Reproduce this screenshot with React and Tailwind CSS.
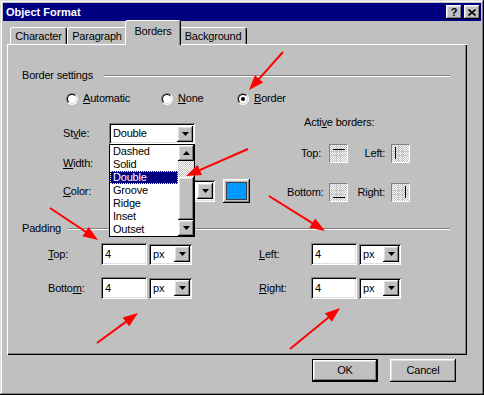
import React from 'react'

const RAISED = 'shadow-[inset_-1px_-1px_#000,inset_1px_1px_#fff,inset_-2px_-2px_#808080,inset_2px_2px_#dfdfdf]'
const SUNKEN = 'shadow-[inset_1px_1px_#808080,inset_-1px_-1px_#fff,inset_2px_2px_#000,inset_-2px_-2px_#dfdfdf]'
const CHECKER = 'bg-[repeating-conic-gradient(#ffffff_0_25%,#c0c0c0_0_50%)] bg-[length:2px_2px]'

const STYLES = ['Dashed', 'Solid', 'Double', 'Groove', 'Ridge', 'Inset', 'Outset']

function Tri({ up }) {
  return (
    <svg width="7" height="4" viewBox="0 0 7 4">
      <polygon points={up ? '3.5,0 7,4 0,4' : '0,0 7,0 3.5,4'} fill="#000" />
    </svg>
  )
}

function ArrowBtn({ className = '' }) {
  return (
    <div className={`w-[16px] h-[16px] bg-[#c0c0c0] flex items-center justify-center ${RAISED} ${className}`}>
      <Tri />
    </div>
  )
}

function Select({ value, w, h = 'h-[21px]', children }) {
  return (
    <div className={`relative ${w} ${h} bg-white ${SUNKEN} flex items-center p-[2px]`}>
      <span className="flex-1 pl-[2px] leading-none">{value}</span>
      <ArrowBtn />
      {children}
    </div>
  )
}

function Radio({ checked, children, className = '' }) {
  return (
    <div className={`flex items-center ${className}`}>
      <span className="w-[12px] h-[12px] rounded-full border border-t-[#808080] border-l-[#808080] border-r-white border-b-white flex">
        <span className="w-full h-full rounded-full bg-white border border-t-black border-l-black border-r-[#dfdfdf] border-b-[#dfdfdf] flex items-center justify-center">
          {checked && <span className="w-[4px] h-[4px] rounded-full bg-black" />}
        </span>
      </span>
      <span className="ml-[5px]">{children}</span>
    </div>
  )
}

function GroupHeader({ label, labelW }) {
  return (
    <div className="h-[13px] flex items-center pl-[15px] pr-[17px]">
      <span className={`${labelW} shrink-0 leading-none`}>{label}</span>
      <div className="flex-1 h-[2px] border-t border-t-[#808080] border-b border-b-white" />
    </div>
  )
}

function EdgeBox({ side }) {
  const line = {
    top: <line x1="3" y1="4.5" x2="15" y2="4.5" />,
    left: <line x1="3.5" y1="2" x2="3.5" y2="14" />,
    bottom: <line x1="3" y1="13.5" x2="15" y2="13.5" />,
    right: <line x1="13.5" y1="2" x2="13.5" y2="14" />,
  }[side]
  return (
    <div className={`w-[19px] h-[19px] border border-t-[#808080] border-l-[#808080] border-r-white border-b-white ${CHECKER}`}>
      <svg width="17" height="17" viewBox="0 0 17 17">
        <g stroke="#b4b4b4" strokeDasharray="1 1" opacity="0.6">
          <line x1="6.5" y1="1" x2="6.5" y2="16" />
          <line x1="10.5" y1="1" x2="10.5" y2="16" />
          <line x1="1" y1="6.5" x2="16" y2="6.5" />
          <line x1="1" y1="10.5" x2="16" y2="10.5" />
        </g>
        <g stroke="#000" strokeWidth="1">{line}</g>
      </svg>
    </div>
  )
}

function NumField() {
  return (
    <div className={`w-[46px] h-[22px] bg-white ${SUNKEN} flex items-center pl-[4px]`}>4</div>
  )
}

function PadRow({ l1, l2, className = '' }) {
  return (
    <div className={`h-[22px] flex items-center pl-[41px] ${className}`}>
      <span className="w-[53px]">{l1}</span>
      <NumField />
      <div className="ml-[2px]"><Select value="px" w="w-[43px]" /></div>
      <span className="ml-[67px] w-[52px]">{l2}</span>
      <NumField />
      <div className="ml-[2px]"><Select value="px" w="w-[42px]" /></div>
    </div>
  )
}

function RedArrow({ x1, y1, x2, y2 }) {
  const a = Math.atan2(y2 - y1, x2 - x1)
  const L = 15
  const W = 5.5
  const bx = x2 - L * Math.cos(a)
  const by = y2 - L * Math.sin(a)
  const px = -Math.sin(a) * W
  const py = Math.cos(a) * W
  return (
    <g>
      <line x1={x1} y1={y1} x2={bx + 2 * Math.cos(a)} y2={by + 2 * Math.sin(a)} stroke="#ff0000" strokeWidth="2" />
      <polygon points={`${x2},${y2} ${bx + px},${by + py} ${bx - px},${by - py}`} fill="#ff0000" />
    </g>
  )
}

const ARROWS = [
  [283, 52, 249, 90],
  [248, 149, 186, 176],
  [50, 208, 98, 240],
  [269, 196, 325, 231],
  [97, 343, 138, 313],
  [290, 349, 340, 308],
]

export default function App() {
  return (
    <div className={`relative w-[484px] h-[395px] bg-[#c0c0c0] p-[3px] flex flex-col text-[11px] text-black font-['Liberation_Sans',Arial,sans-serif] tracking-[-0.2px] shadow-[inset_-1px_-1px_#000,inset_1px_1px_#dfdfdf,inset_-2px_-2px_#808080,inset_2px_2px_#fff]`}>
      {/* Title bar */}
      <div className="h-[18px] bg-[#000080] flex items-center pl-[3px] pr-[1px]">
        <span className="text-white font-bold tracking-normal">Object Format</span>
        <div className="ml-auto flex gap-[2px]">
          <div className={`w-[16px] h-[14px] bg-[#c0c0c0] ${RAISED} flex items-center justify-center font-bold leading-none`}>?</div>
          <div className={`w-[16px] h-[14px] bg-[#c0c0c0] ${RAISED} flex items-center justify-center`}>
            <svg width="8" height="7" viewBox="0 0 8 7">
              <path d="M0.5 0.5L7.5 6.5M7.5 0.5L0.5 6.5" stroke="#000" strokeWidth="1.6" />
            </svg>
          </div>
        </div>
      </div>

      {/* Tabs */}
      <div className="mt-[2px] h-[21px] flex items-end pl-[7px]">
        {[
          ['Character', 'w-[57px]'],
          ['Paragraph', 'w-[60px]'],
          ['Borders', 'w-[50px]', true],
          ['Background', 'w-[68px]'],
        ].map(([t, w, sel]) => (
          <div
            key={t}
            className={`${w} flex justify-center border-t border-l border-white border-r border-r-black rounded-t-[3px] shadow-[inset_-1px_0_#808080] bg-[#c0c0c0] ${
              sel ? 'h-[22px] -mb-[1px] -mx-[2px] box-content px-[2px] relative z-10 items-start pt-[2px]' : 'h-[17px] items-center'
            }`}
          >
            {t}
          </div>
        ))}
      </div>

      {/* Panel */}
      <div className="ml-[4px] w-[460px] h-[311px] flex flex-col shadow-[inset_1px_1px_#fff,inset_-1px_-1px_#000,inset_-2px_-2px_#808080]">
        <div className="mt-[25px]">
          <GroupHeader label="Border settings" labelW="w-[82px]" />
        </div>

        <div className="mt-[10px] h-[13px] flex items-center pl-[59px]">
          <Radio className="w-[95px]"><span className="underline">A</span>utomatic</Radio>
          <Radio className="w-[76px]"><span className="underline">N</span>one</Radio>
          <Radio checked><span className="underline">B</span>order</Radio>
        </div>

        <div className="mt-[11px] flex">
          <div className="w-[280px] pt-[7px] pl-[56px] flex flex-col">
            <div className="h-[21px] flex items-center relative z-20">
              <span className="w-[46px]">St<span className="underline">y</span>le:</span>
              <Select value="Double" w="w-[86px]">
                <div className="absolute left-0 top-[21px] w-[86px] h-[93px] border border-black bg-white flex">
                  <div className="flex-1 flex flex-col">
                    {STYLES.map((s) => (
                      <div
                        key={s}
                        className={`h-[13px] leading-[13px] pl-[3px] ${
                          s === 'Double' ? 'bg-[#000080] text-white outline-1 outline-dotted outline-[#ffffa0] -outline-offset-1' : ''
                        }`}
                      >
                        {s}
                      </div>
                    ))}
                  </div>
                  <div className="w-[16px] flex flex-col">
                    <div className={`h-[16px] bg-[#c0c0c0] flex items-center justify-center ${RAISED}`}><Tri up /></div>
                    <div className={`h-[16px] ${CHECKER}`} />
                    <div className={`h-[43px] bg-[#c0c0c0] ${RAISED}`} />
                    <div className={`h-[16px] bg-[#c0c0c0] flex items-center justify-center ${RAISED}`}><Tri /></div>
                  </div>
                </div>
              </Select>
            </div>
            <div className="mt-[9px] h-[21px] flex items-center">
              <span className="w-[46px]"><span className="underline">W</span>idth:</span>
              <Select value="" w="w-[86px]" />
            </div>
            <div className="mt-[6px] h-[22px] flex items-center">
              <span className="w-[46px]"><span className="underline">C</span>olor:</span>
              <Select value="" w="w-[106px]" h="h-[22px]" />
              <div className={`ml-[8px] w-[27px] h-[24px] bg-[#c0c0c0] ${RAISED} p-[3px]`}>
                <div className="w-full h-full bg-[#0099ff] border border-[#404040]" />
              </div>
            </div>
          </div>

          <div className="flex flex-col">
            <div className="h-[13px] leading-[13px] pl-[17px]">Acti<span className="underline">v</span>e borders:</div>
            <div className="mt-[15px] h-[19px] flex items-center">
              <span className="w-[34px] text-right">Top:</span>
              <div className="ml-[8px]"><EdgeBox side="top" /></div>
              <span className="w-[37px] text-right">Left:</span>
              <div className="ml-[6px]"><EdgeBox side="left" /></div>
            </div>
            <div className="mt-[20px] h-[19px] flex items-center">
              <span className="w-[34px] text-right">Bottom:</span>
              <div className="ml-[8px]"><EdgeBox side="bottom" /></div>
              <span className="w-[37px] text-right">Right:</span>
              <div className="ml-[6px]"><EdgeBox side="right" /></div>
            </div>
          </div>
        </div>

        <div className="mt-[20px]">
          <GroupHeader label="Padding" labelW="w-[46px]" />
        </div>
        <PadRow
          className="mt-[8px]"
          l1={<><span className="underline">T</span>op:</>}
          l2={<><span className="underline">L</span>eft:</>}
        />
        <PadRow
          className="mt-[12px]"
          l1={<>Botto<span className="underline">m</span>:</>}
          l2={<><span className="underline">R</span>ight:</>}
        />
      </div>

      {/* Buttons */}
      <div className="mt-[4px] flex justify-end gap-[12px] pr-[25px]">
        <div className="w-[66px] h-[23px] border border-black">
          <div className={`w-full h-full flex items-center justify-center ${RAISED}`}>OK</div>
        </div>
        <div className={`w-[66px] h-[23px] flex items-center justify-center ${RAISED}`}>Cancel</div>
      </div>

      <svg className="absolute inset-0 pointer-events-none z-30" width="484" height="395">
        {ARROWS.map(([x1, y1, x2, y2], i) => (
          <RedArrow key={i} x1={x1} y1={y1} x2={x2} y2={y2} />
        ))}
      </svg>
    </div>
  )
}
